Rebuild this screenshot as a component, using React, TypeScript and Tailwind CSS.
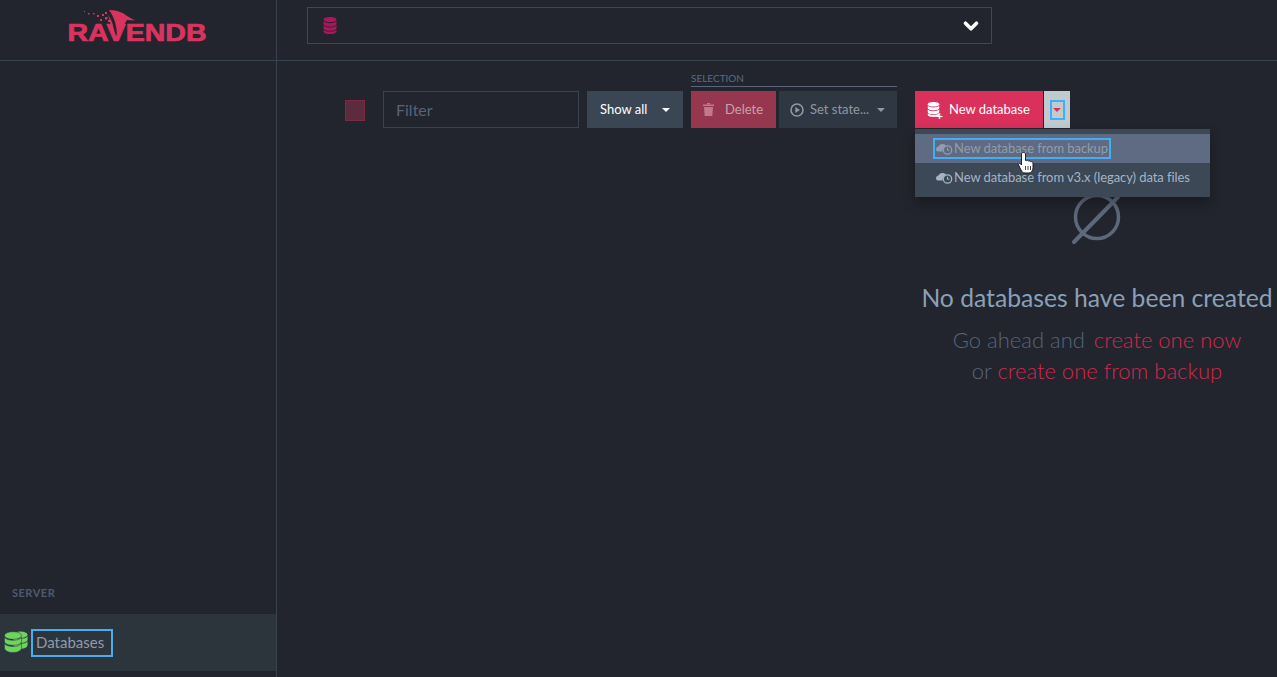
import { ChevronDown } from "lucide-react";

const lato = "font-['Lato','Liberation_Sans',sans-serif]";

function DbIcon({ className }: { className?: string }) {
  return (
    <svg viewBox="0 0 14 17" className={className} fill="currentColor">
      <path d="M7 0C3.2 0 .5 1 .5 2.600S3.200 5.200 7 5.200s6.500-1 6.500-2.600S10.800 0 7 0Z" />
      <path d="M.5 4.300v2.600C.5 8.400 3.200 9.500 7 9.500s6.500-1.100 6.500-2.600V4.300C12.300 5.600 9.800 6.200 7 6.200S1.700 5.600.5 4.300Z" />
      <path d="M.5 8.600v2.600c0 1.500 2.700 2.600 6.500 2.600s6.500-1.100 6.500-2.600V8.600c-1.200 1.300-3.700 1.900-6.500 1.900S1.700 9.900.5 8.600Z" />
      <path d="M.5 12.700v1.700C.5 15.900 3.200 17 7 17s6.500-1.100 6.500-2.600v-1.700c-1.200 1.300-3.700 1.900-6.500 1.900S1.700 14 .5 12.700Z" />
    </svg>
  );
}

// three-band stack used in the sidebar
function StackIcon({ className }: { className?: string }) {
  return (
    <svg viewBox="0 0 18 22" className={className} fill="currentColor">
      <ellipse cx="9" cy="4" rx="8.500" ry="3.800" />
      <path d="M.5 5.800v4.200c0 2.200 3.800 3.800 8.500 3.800s8.500-1.600 8.500-3.800V5.800C15.800 8 12.500 8.800 9 8.800S2.200 8 .5 5.800Z" />
      <path d="M.5 12v4.500c0 2.700 3.800 4.500 8.500 4.500s8.500-1.800 8.500-4.500V12c-1.700 2.200-5 3-8.500 3S2.200 14.200.5 12Z" />
    </svg>
  );
}

function Caret({ className }: { className?: string }) {
  return <span className={`inline-block w-0 h-0 border-x-[4px] border-x-transparent border-t-[4px] ${className ?? ""}`} />;
}

function Logo() {
  return (
    <svg viewBox="0 0 140 32" className="h-[32px] w-[140px] overflow-visible text-[#db3360]" fill="currentColor">
      <path d="M42 0C50 0 57 3 60 6L68 10.500 60 10C57 14 55 20 53 27L50 27C50 17 48 8 42 0Z" />
      <path d="M41 5C45 10 47 17 47 24L44 20C44 15 43 10 41 5Z" />
      <g>
        <rect x="17" y="1" width="1" height="1" />
        <rect x="21" y="3" width="1.500" height="1.500" />
        <rect x="26" y="3" width="1.500" height="1.500" />
        <rect x="30" y="5" width="2" height="2" />
        <rect x="35" y="4" width="2" height="2" />
        <rect x="38" y="7" width="2.500" height="2.500" />
        <rect x="38" y="2" width="2" height="2" />
        <rect x="33" y="9" width="2" height="2" />
        <rect x="41" y="10" width="2" height="2" />
      </g>
      <text
        x="0.500"
        y="30.500"
        textLength="139"
        lengthAdjust="spacingAndGlyphs"
        fontFamily="Liberation Sans, sans-serif"
        fontWeight="700"
        fontSize="23"
        stroke="currentColor"
        strokeWidth="0.700"
      >
        RAVENDB
      </text>
    </svg>
  );
}

function BackupIcon() {
  return (
    <svg viewBox="0 0 19 13" className="h-[13px] w-[19px] shrink-0" fill="none">
      <path d="M1 7.500C1 5.700 2.300 4.800 3.500 4.600 4.200 2.800 5.800 2 7.500 2c1.500 0 2.700.6 3.500 1.700C9 4.300 7.500 6.200 7.500 9.500H3C1.800 9.500 1 8.700 1 7.500Z" fill="currentColor" />
      <circle cx="12.500" cy="8" r="4.200" stroke="currentColor" strokeWidth="1.300" />
      <path d="M12.500 5.700v2.500h2" stroke="currentColor" strokeWidth="1" />
    </svg>
  );
}

export default function App() {
  return (
    <div className={`${lato} relative flex h-[677px] w-[1277px] overflow-hidden bg-[#22252d]`}>
      <aside className="flex w-[277px] shrink-0 flex-col border-r border-[#39434f]">
        <div className="flex h-[61px] shrink-0 items-start justify-center border-b border-[#39434f] pt-[10px] pr-[2px]">
          <Logo />
        </div>
        <div className="mt-auto mb-[6px]">
          <div className="pl-3 pb-[15px] text-[11px] leading-[13px] font-bold tracking-[0.5px] text-[#4f5a70]">SERVER</div>
          <div className="flex h-[57px] items-center bg-[#2d353c] pl-1">
            <div className="relative h-[23px] w-[24px] shrink-0 text-[#6fd35f]">
              <StackIcon className="absolute right-0 top-0 h-[19px] w-[15px]" />
              <StackIcon className="absolute left-0 top-0 h-[23px] w-[18px] stroke-[#2d353c] stroke-[0.5]" />
            </div>
            <div className="ml-[3px] flex h-[28px] w-[82px] items-center border-2 border-[#43aef2] pl-[3px] text-[15px] text-[#8e9aab]">
              Databases
            </div>
          </div>
        </div>
      </aside>

      <main className="flex min-w-0 flex-1 flex-col">
        <header className="flex h-[61px] shrink-0 items-start border-b border-[#39434f] pl-[30px] pt-[7px]">
          <div className="flex h-[37px] w-[685px] items-center justify-between border border-[#3d4755] pl-[15px] pr-[9px]">
            <DbIcon className="h-[17px] w-[14px] text-[#b0145c]" />
            <ChevronDown className="h-[22px] w-[22px] text-white" strokeWidth={4} />
          </div>
        </header>

        <div className="relative flex items-end pl-[68px] pt-[11px]">
          <div className="mb-[7px] h-[21px] w-[20px] border border-[#7b2a42] bg-[#5c2b3d]" />
          <input
            placeholder="Filter"
            className="ml-[18px] h-[37px] w-[196px] border border-[#39434f] bg-transparent pl-[12px] text-[16px] text-white outline-none placeholder:text-[#566379]"
          />
          <button className="ml-[8px] flex h-[37px] w-[96px] items-center bg-[#3b4655] pl-[13px] text-[13px] text-white">
            Show all
            <Caret className="ml-[15px] border-t-white" />
          </button>
          <div className="ml-[8px] w-[206px]">
            <div className="h-[15px] border-b border-[#5a6478] text-[10px] leading-[12px] text-[#5a6a88]">SELECTION</div>
            <div className="mt-[4px] flex gap-[3px]">
              <button className="flex h-[37px] w-[85px] items-center bg-[#97364f] pl-[12px] text-[13px] text-[#c4a3ad]">
                <svg viewBox="0 0 11 13" className="h-[13px] w-[11px] text-[#c07a8b]" fill="currentColor">
                  <path d="M0 1.500h11V3H0ZM1 4h9l-.7 9H1.700Z" />
                  <path d="M4 0h3v1.500H4Z" />
                </svg>
                <span className="ml-[11px]">Delete</span>
              </button>
              <button className="flex h-[37px] w-[118px] items-center bg-[#2f3742] pl-[11px] text-[13px] text-[#8e98a3]">
                <svg viewBox="0 0 14 14" className="h-[14px] w-[14px]" fill="none">
                  <circle cx="7" cy="7" r="6" stroke="currentColor" strokeWidth="1.600" />
                  <path d="M5.300 4v6L10 7Z" fill="currentColor" />
                </svg>
                <span className="ml-[6px]">Set state...</span>
                <Caret className="ml-[8px] border-t-[#8e98a3]" />
              </button>
            </div>
          </div>
          <button className="ml-[18px] flex h-[37px] w-[128px] items-center bg-[#d9305c] pl-[12px] text-[13px] text-white">
            <span className="relative">
              <DbIcon className="h-[15px] w-[13px]" />
              <span className="absolute -bottom-[3px] -right-[3px] text-[12px] leading-[8px] font-bold">+</span>
            </span>
            <span className="ml-[9px]">New database</span>
          </button>
          <button className="ml-px flex h-[37px] w-[26px] items-center justify-center bg-[#c0cbd0]">
            <span className="flex h-[20px] w-[15px] items-center justify-center border-2 border-[#43aef2]">
              <Caret className="border-t-[#d9305c]" />
            </span>
          </button>

          <div className="absolute left-[638px] top-[68px] z-10 w-[295px] whitespace-nowrap bg-[#3c4856] py-[5px] text-[13px] tracking-[-0.07px] shadow-[0_6px_12px_rgba(0,0,0,0.3)]">
            <div className="flex h-[29px] items-center bg-[#5f6b82] pl-[18px]">
              <div className="flex h-[21px] w-[178px] items-center border-2 border-[#43aef2] text-[#8f9db0]">
                <BackupIcon />
                New database from backup
              </div>
            </div>
            <div className="flex h-[29px] items-center pl-[20px] text-[#a4b3c5]">
              <BackupIcon />
              New database from v3.x (legacy) data files
            </div>
          </div>
          <svg viewBox="0 0 16 22" className="absolute left-[741px] top-[91px] z-20 h-[22px] w-[16px]">
            <path
              d="M3.500 2c0-2 4-2 4 0v6.500l1 .1c1-.6 2 0 2 .5 1-.5 2 0 2 .6 1-.3 2.500.2 2.500 1.300v4.500c0 2.500-1.500 5.500-4 5.500H7c-2 0-3-1-4-3L.6 13c-.7-1.200.8-2.300 1.800-1.300l1.100 1.300Z"
              fill="#fff"
              stroke="#111"
              strokeWidth="0.900"
            />
            <path d="M7.500 14v4M10 14v4M12.500 14v4" stroke="#111" strokeWidth="0.800" />
          </svg>
        </div>

        <div className="ml-[640px] mt-[65px] w-[360px] text-center">
          <svg viewBox="0 0 52 52" className="mx-auto h-[52px] w-[52px] text-[#5d687b]" fill="none">
            <circle cx="26" cy="24" r="21.500" stroke="currentColor" strokeWidth="3.500" />
            <path d="M3 49 47 4" stroke="currentColor" strokeWidth="4" strokeLinecap="round" />
          </svg>
          <div className="mt-[38px] text-[24.7px] leading-[30px] text-[#8ba0b8]">No databases have been created</div>
          <div className="mt-[11px] text-[22px] leading-[31px] font-light text-[#56647e]">
            Go ahead and <span className="ml-[3px] text-[#d0284f]">create one now</span>
            <br />
            or <span className="text-[#d0284f]">create one from backup</span>
          </div>
        </div>
      </main>
    </div>
  );
}
